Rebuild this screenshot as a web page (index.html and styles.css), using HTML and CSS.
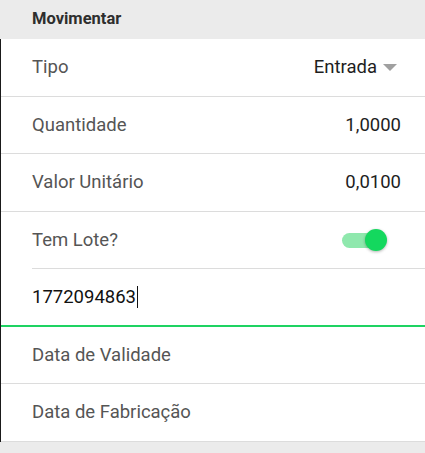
FILE: index.html
```html
<!DOCTYPE html>
<html lang="pt">
<head>
<meta charset="utf-8">
<link rel="stylesheet" href="styles.css">
</head>
<body>
<div class="page">
  <div class="header">Movimentar</div>
  <div class="list">
    <div class="row">
      <span class="label">Tipo</span>
      <span class="value select">Entrada <span class="caret-down"></span></span>
    </div>
    <div class="row">
      <span class="label">Quantidade</span>
      <span class="value">1,0000</span>
    </div>
    <div class="row">
      <span class="label">Valor Unitário</span>
      <span class="value">0,0100</span>
    </div>
    <div class="row inset">
      <span class="label">Tem Lote?</span>
      <span class="toggle"><span class="track"></span><span class="knob"></span></span>
    </div>
    <div class="row input-row">
      <span class="input-text">1772094863<span class="cursor"></span></span>
    </div>
    <div class="row">
      <span class="label">Data de Validade</span>
    </div>
    <div class="row">
      <span class="label">Data de Fabricação</span>
    </div>
  </div>
  <div class="footer"></div>
</div>
</body>
</html>
```
FILE: styles.css
```css
html, body {
  margin: 0;
  padding: 0;
}
body {
  background: #ebebeb;
  font-family: Roboto, "Liberation Sans", Arial, sans-serif;
  width: 425px;
  height: 453px;
  overflow: hidden;
}
.page {
  display: flex;
  flex-direction: column;
}
.header {
  height: 39px;
  box-sizing: border-box;
  padding: 0 32px 3px;
  display: flex;
  align-items: center;
  font-size: 16.5px;
  font-weight: 700;
  color: #2e2e2e;
  background: #ebebeb;
}
.list {
  background: #fff;
  border-left: 1px solid #1a1a1a;
  display: flex;
  flex-direction: column;
}
.row {
  height: 57.5px;
  box-sizing: border-box;
  border-bottom: 1px solid #dcdcdc;
  display: flex;
  align-items: center;
  justify-content: space-between;
  padding: 0 24px 0 31px;
  font-size: 18.5px;
}
.row.inset {
  border-bottom: none;
  background-image: linear-gradient(#dcdcdc, #dcdcdc);
  background-repeat: no-repeat;
  background-size: calc(100% - 31px) 1px;
  background-position: right bottom;
}
.label {
  color: #555555;
}
.value {
  color: #1e1e1e;
}
.select {
  display: flex;
  align-items: center;
  gap: 6px;
}
.caret-down {
  width: 0;
  height: 0;
  border-left: 7px solid transparent;
  border-right: 7px solid transparent;
  border-top: 7px solid #a0a0a0;
  margin-top: 1px;
  margin-right: 4px;
}
.toggle {
  position: relative;
  width: 45px;
  height: 23px;
  margin-right: 14px;
}
.track {
  position: absolute;
  left: 0;
  top: 4px;
  width: 34px;
  height: 15px;
  border-radius: 8px;
  background: #8fe8ad;
}
.knob {
  position: absolute;
  right: 0;
  top: 0;
  width: 22px;
  height: 22px;
  border-radius: 50%;
  background: #14d85e;
  box-shadow: 0 1px 3px rgba(0,0,0,0.3);
}
.input-row {
  border-bottom: 2px solid #1ed362;
  justify-content: flex-start;
}
.input-text {
  color: #111;
  display: flex;
  align-items: center;
}
.cursor {
  display: inline-block;
  width: 1px;
  height: 22px;
  background: #111;
  margin-left: 1px;
}
.footer {
  height: 20px;
  background: #ebebeb;
}
```
